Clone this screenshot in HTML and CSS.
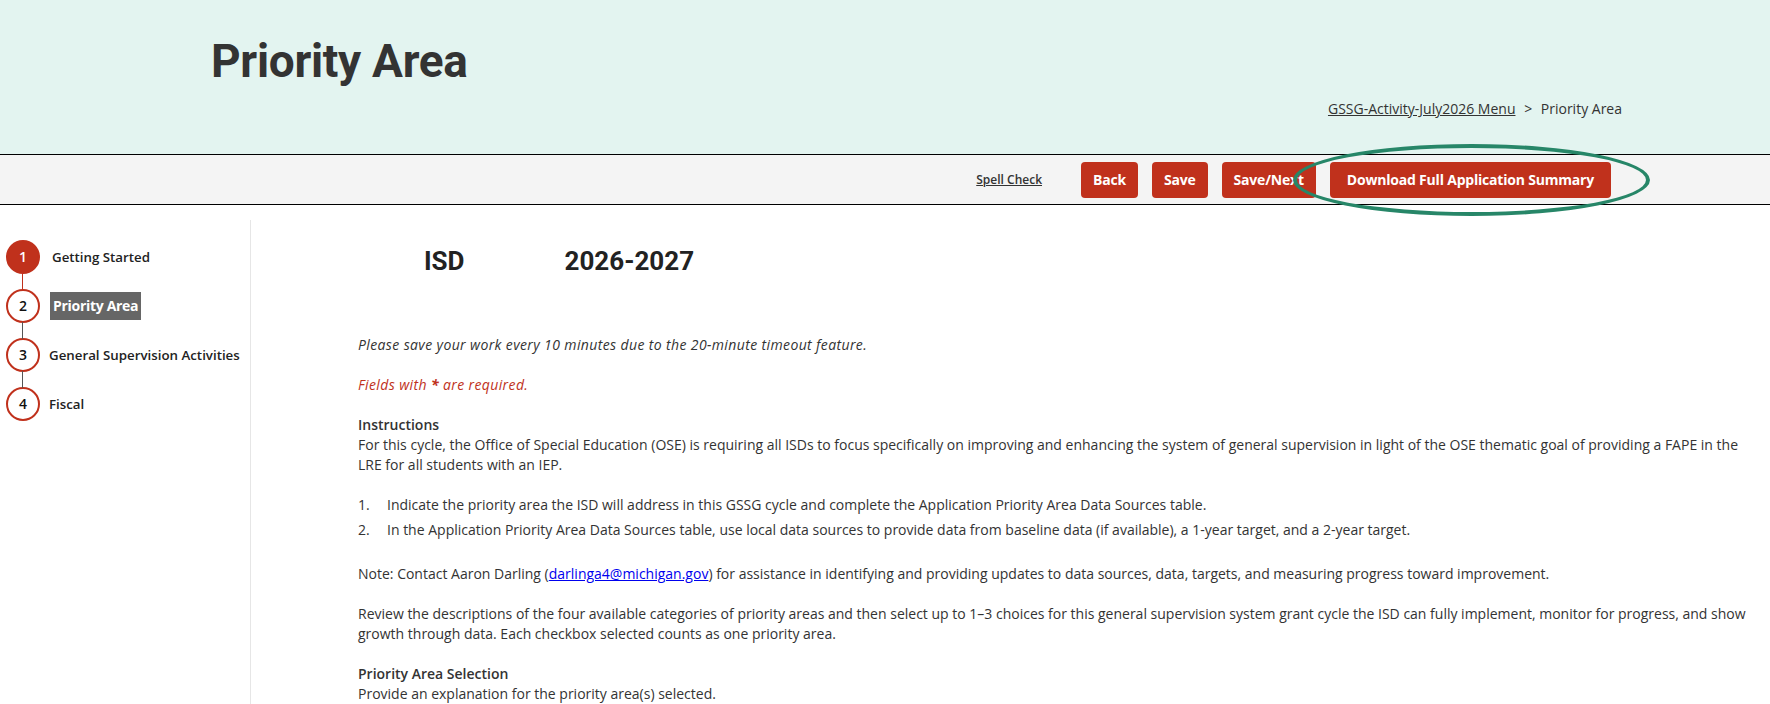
FILE: index.html
```html
<!DOCTYPE html>
<html lang="en">

<head>
    <meta charset="UTF-8">
    <meta name="viewport" content="width=device-width, initial-scale=1.0">
    <title>Priority Area</title>

    <link rel="stylesheet" href="styles.css">
</head>

<body>
    <!-- CABECERA -->
    <header class="banner">
        <h1 class="banner-title">Priority Area</h1>
        <nav class="crumbs">
            <a href="#">GSSG-Activity-July2026 Menu</a>
            <span class="crumbs-sep">&gt;</span>
            <span>Priority Area</span>
        </nav>
    </header>

    <!-- BARRA DE BOTONES -->
    <div class="toolbar">
        <a href="#" class="spell">Spell Check</a>
        <div class="actions">
            <button class="btn">Back</button>
            <button class="btn">Save</button>
            <button class="btn">Save/Next</button>
            <div class="btn-wrap">
                <button class="btn btn-wide">Download Full Application Summary</button>
                <span class="ring"></span>
            </div>
        </div>
    </div>

    <div class="page">
        <!-- PASOS -->
        <aside class="steps">
            <ol class="steps-list">
                <li class="step done"><span class="dot">1</span><span class="label">Getting Started</span></li>
                <li class="step current"><span class="dot">2</span><span class="label">Priority Area</span></li>
                <li class="step"><span class="dot">3</span><span class="label">General Supervision Activities</span></li>
                <li class="step"><span class="dot">4</span><span class="label">Fiscal</span></li>
            </ol>
        </aside>

        <!-- CONTENIDO -->
        <main class="content">
            <div class="meta">
                <h2>ISD</h2>
                <h2>2026-2027</h2>
            </div>

            <p class="note"><em>Please save your work every 10 minutes due to the 20-minute timeout feature.</em></p>
            <p class="req"><em>Fields with <strong>*</strong> are required.</em></p>

            <p>
                <strong class="sub">Instructions</strong><br>
                For this cycle, the Office of Special Education (OSE) is requiring all ISDs to focus specifically on improving and enhancing the system of general supervision in light of the OSE thematic goal of providing a FAPE in the LRE for all students with an IEP.
            </p>

            <ol class="todo">
                <li>Indicate the priority area the ISD will address in this GSSG cycle and complete the Application Priority Area Data Sources table.</li>
                <li>In the Application Priority Area Data Sources table, use local data sources to provide data from baseline data (if available), a 1-year target, and a 2-year target.</li>
            </ol>

            <p>Note: Contact Aaron Darling (<a href="#">darlinga4@michigan.gov</a>) for assistance in identifying and providing updates to data sources, data, targets, and measuring progress toward improvement.</p>

            <p>Review the descriptions of the four available categories of priority areas and then select up to 1&ndash;3 choices for this general supervision system grant cycle the ISD can fully implement, monitor for progress, and show growth through data. Each checkbox selected counts as one priority area.</p>

            <p>
                <strong class="sub">Priority Area Selection</strong><br>
                Provide an explanation for the priority area(s) selected.
            </p>
        </main>
    </div>
</body>

</html>
```

FILE: styles.css
```css
:root {
    --rojo: #c0311c;
    --verde: #278668;
    --texto: #333;
    --ff: "Open Sans", sans-serif;
}

body {
    margin: 0;
    font-family: var(--ff);
    font-size: 14px;
    line-height: 20px;
    color: var(--texto);
    background: #fff;
}

/* cabecera */
.banner {
    background: #e3f4f0;
    height: 154px;
    border-bottom: 1px solid #000;
    padding: 0 148px 0 211px;
    display: flex;
    flex-direction: column;
}

.banner-title {
    font-family: Roboto, sans-serif;
    font-weight: 700;
    font-size: 46px;
    letter-spacing: -0.3px;
    line-height: 56px;
    margin: 33px 0 0;
    color: #333;
}

.crumbs {
    align-self: flex-end;
    margin-top: 10px;
    color: #333;
}

.crumbs a {
    color: #333;
}

.crumbs-sep {
    margin: 0 5px;
}

/* barra */
.toolbar {
    background: #f4f4f4;
    height: 49px;
    border-bottom: 1px solid #000;
    display: flex;
    justify-content: flex-end;
    align-items: center;
    padding-right: 159px;
}

.spell {
    font-size: 12px;
    font-weight: 600;
    color: #333;
    margin-right: 39px;
}

.actions {
    display: flex;
    gap: 14px;
}

.btn {
    font-family: var(--ff);
    font-size: 14px;
    font-weight: 700;
    color: #fff;
    background: var(--rojo);
    border: none;
    border-radius: 4px;
    height: 36px;
    padding: 0 12px;
    letter-spacing: -0.2px;
}

.btn-wide {
    padding: 0 17px;
}

.btn-wrap {
    position: relative;
    margin-left: 0;
}

.ring {
    position: absolute;
    left: -37px;
    right: -39px;
    top: -18px;
    bottom: -18px;
    border: 4px solid var(--verde);
    border-radius: 50%;
    pointer-events: none;
}

/* cuerpo */
.page {
    display: grid;
    grid-template-columns: 251px 1fr;
    padding-top: 15px;
}

.steps {
    border-right: 1px solid #e6e6e6;
    min-height: 500px;
}

.steps-list {
    list-style: none;
    margin: 20px 0 0;
    padding: 0 0 0 6px;
}

.step {
    display: flex;
    align-items: center;
    height: 34px;
    margin-bottom: 15px;
    position: relative;
    font-weight: 600;
    font-size: 13.3px;
    color: #222;
}

/* linea entre pasos */
.step + .step::before {
    content: "";
    position: absolute;
    left: 16px;
    top: -16px;
    width: 1px;
    height: 17px;
    background: #555;
}

.step.current::before {
    background: var(--rojo);
}

.dot {
    box-sizing: border-box;
    width: 34px;
    height: 34px;
    border: 2px solid var(--rojo);
    border-radius: 50%;
    background: #fff;
    display: flex;
    align-items: center;
    justify-content: center;
    font-size: 14px;
    font-weight: 600;
    color: #111;
    flex-shrink: 0;
}

.done .dot {
    background: var(--rojo);
    color: #fff;
}

.label {
    margin-left: 9px;
}

.done .label {
    margin-left: 12px;
}

.current .label {
    margin-left: 10px;
    background: #666;
    color: #fff;
    font-weight: 700;
    font-size: 14px;
    padding: 4px 3px;
    line-height: 20px;
    letter-spacing: -0.3px;
}

.content {
    padding: 0 20px 0 107px;
}

.meta {
    display: flex;
    gap: 100px;
    padding-left: 66px;
    margin-top: 26px;
}

.meta h2 {
    font-family: Roboto, sans-serif;
    font-weight: 700;
    font-size: 26px;
    line-height: 30px;
    margin: 0;
    color: #222;
}

.content p {
    margin: 0 0 20px;
}

.note {
    margin-top: 59px !important;
}

.note,
.req {
    letter-spacing: 0.38px;
}

.req {
    color: var(--rojo);
}

.sub {
    font-weight: 600;
}

.todo {
    list-style: none;
    counter-reset: paso;
    margin: 0 0 24px;
    padding: 0;
}

.todo li {
    counter-increment: paso;
    display: flex;
    margin-bottom: 5px;
}

.todo li::before {
    content: counter(paso) ".";
    width: 29px;
    flex-shrink: 0;
}

.content a {
    color: #00e;
}
```
